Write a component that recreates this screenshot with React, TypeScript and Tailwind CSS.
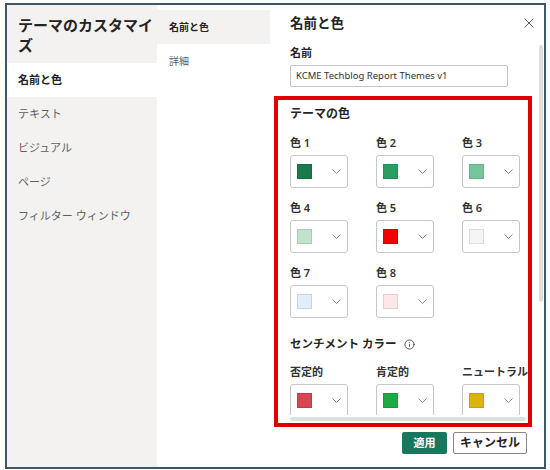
import { Info } from "lucide-react";

const FONT = {
  fontFamily: '"Noto Sans", "Noto Sans CJK JP", sans-serif',
};

type Swatch = { label: string; color: string };

const THEME_COLORS: Swatch[] = [
  { label: "色 1", color: "#1b7a4c" },
  { label: "色 2", color: "#2a9d61" },
  { label: "色 3", color: "#76c59a" },
  { label: "色 4", color: "#bfe3cd" },
  { label: "色 5", color: "#f40000" },
  { label: "色 6", color: "#f4f5f8" },
  { label: "色 7", color: "#e2edfb" },
  { label: "色 8", color: "#fde7e7" },
];

const SENTIMENT: Swatch[] = [
  { label: "否定的", color: "#d64550" },
  { label: "肯定的", color: "#1aac42" },
  { label: "ニュートラル", color: "#ddb30e" },
];

const NAV = ["名前と色", "テキスト", "ビジュアル", "ページ", "フィルター ウィンドウ"];

function Chevron() {
  return (
    <svg width="9" height="5" viewBox="0 0 9 5" fill="none">
      <polyline points="0.5,0.5 4.5,4.5 8.5,0.5" stroke="#8a8886" strokeWidth="1" />
    </svg>
  );
}

function ColorPicker({ label, color }: Swatch) {
  return (
    <div>
      <div className="h-[14px] leading-[14px] text-[11px] font-semibold text-[#323130]">
        {label}
      </div>
      <div className="mt-[5px] flex h-[33px] w-[58px] items-center justify-between rounded-[3px] border border-[#c8c6c4] bg-white pl-[6px] pr-[6px]">
        <div
          className="h-[15px] w-[15px] border border-black/10"
          style={{ backgroundColor: color }}
        />
        <Chevron />
      </div>
    </div>
  );
}

export default function App() {
  return (
    <div className="h-[470px] w-[550px] bg-white pl-[5px] pt-[3px]" style={FONT}>
      <div className="flex h-[466px] w-[541px] border-2 border-[#3d5668] bg-white">
        {/* 左メニュー */}
        <div className="w-[150px] shrink-0 bg-[#f3f2f1]">
          <div className="whitespace-nowrap pl-[11px] pt-[10px] text-[15px] font-bold leading-[20px] text-[#252423]">
            テーマのカスタマイ
            <br />ズ
          </div>
          <div className="mt-[8px]">
            {NAV.map((item, i) => (
              <div
                key={item}
                className={`flex h-[34px] items-center pl-[11px] text-[11px] ${
                  i === 0
                    ? "bg-white font-bold text-[#252423]"
                    : "text-[#605e5c]"
                }`}
              >
                {item}
              </div>
            ))}
          </div>
        </div>

        {/* サブメニュー */}
        <div className="w-[113px] shrink-0 pt-[5px]">
          <div className="flex h-[34px] items-center bg-[#f3f2f1] pl-[12px] text-[10px] font-bold text-[#252423]">
            名前と色
          </div>
          <div className="flex h-[34px] items-center pl-[12px] text-[10px] text-[#605e5c]">
            詳細
          </div>
        </div>

        {/* 右パネル */}
        <div className="relative flex flex-1 flex-col">
          <div className="flex items-center justify-between pl-[20px] pr-[10px] pt-[8px]">
            <div className="text-[13.5px] font-bold leading-[20px] text-[#252423]">
              名前と色
            </div>
            <svg width="10" height="10" viewBox="0 0 10 10">
              <path d="M0.5 0.5 L9.5 9.5 M9.5 0.5 L0.5 9.5" stroke="#605e5c" strokeWidth="1" />
            </svg>
          </div>

          <div className="pl-[20px]">
            <div className="mt-[12px] h-[16px] text-[11px] font-bold leading-[16px] text-[#252423]">
              名前
            </div>
            <div className="mt-[4px] flex h-[22px] w-[218px] items-center rounded-[2px] border border-[#c8c6c4] pl-[5px] text-[9.5px] text-[#323130]">
              KCME Techblog Report Themes v1
            </div>
          </div>

          {/* テーマの色（赤枠） */}
          <div className="ml-[4px] mt-[9px] h-[331px] w-[258px] border-4 border-[#e00000] pl-[12px]">
            <div className="pt-[5px] text-[12px] font-bold leading-[18px] text-[#252423]">
              テーマの色
            </div>
            <div className="mt-[13px] grid grid-cols-[86px_86px_86px] gap-y-[13px]">
              {THEME_COLORS.map((c) => (
                <ColorPicker key={c.label} {...c} />
              ))}
            </div>
            <div className="mt-[17px] flex items-center gap-[7px] text-[11.5px] font-bold leading-[18px] text-[#252423]">
              センチメント カラー
              <Info size={11} strokeWidth={1.75} color="#323130" />
            </div>
            <div className="mt-[12px] h-[50px] overflow-hidden">
              <div className="grid grid-cols-[86px_86px_86px]">
                {SENTIMENT.map((c) => (
                  <ColorPicker key={c.label} {...c} />
                ))}
              </div>
            </div>
            <div className="mt-[2px] h-[4px] w-[236px] rounded-full bg-[#e1dfdd]" />
          </div>

          {/* フッター */}
          <div className="flex justify-end gap-[6px] pr-[17px] pt-[5px]">
            <button className="h-[22px] w-[45px] rounded-[2px] bg-[#19775f] text-[11px] font-bold text-white">
              適用
            </button>
            <button className="h-[22px] w-[74px] rounded-[2px] border border-[#8a8886] bg-white text-[12px] font-bold text-[#252423]">
              キャンセル
            </button>
          </div>

          {/* スクロールバー */}
          <div className="absolute right-[1px] top-[40px] h-[257px] w-[4px] rounded-full bg-[#e1dfdd]" />
        </div>
      </div>
    </div>
  );
}
